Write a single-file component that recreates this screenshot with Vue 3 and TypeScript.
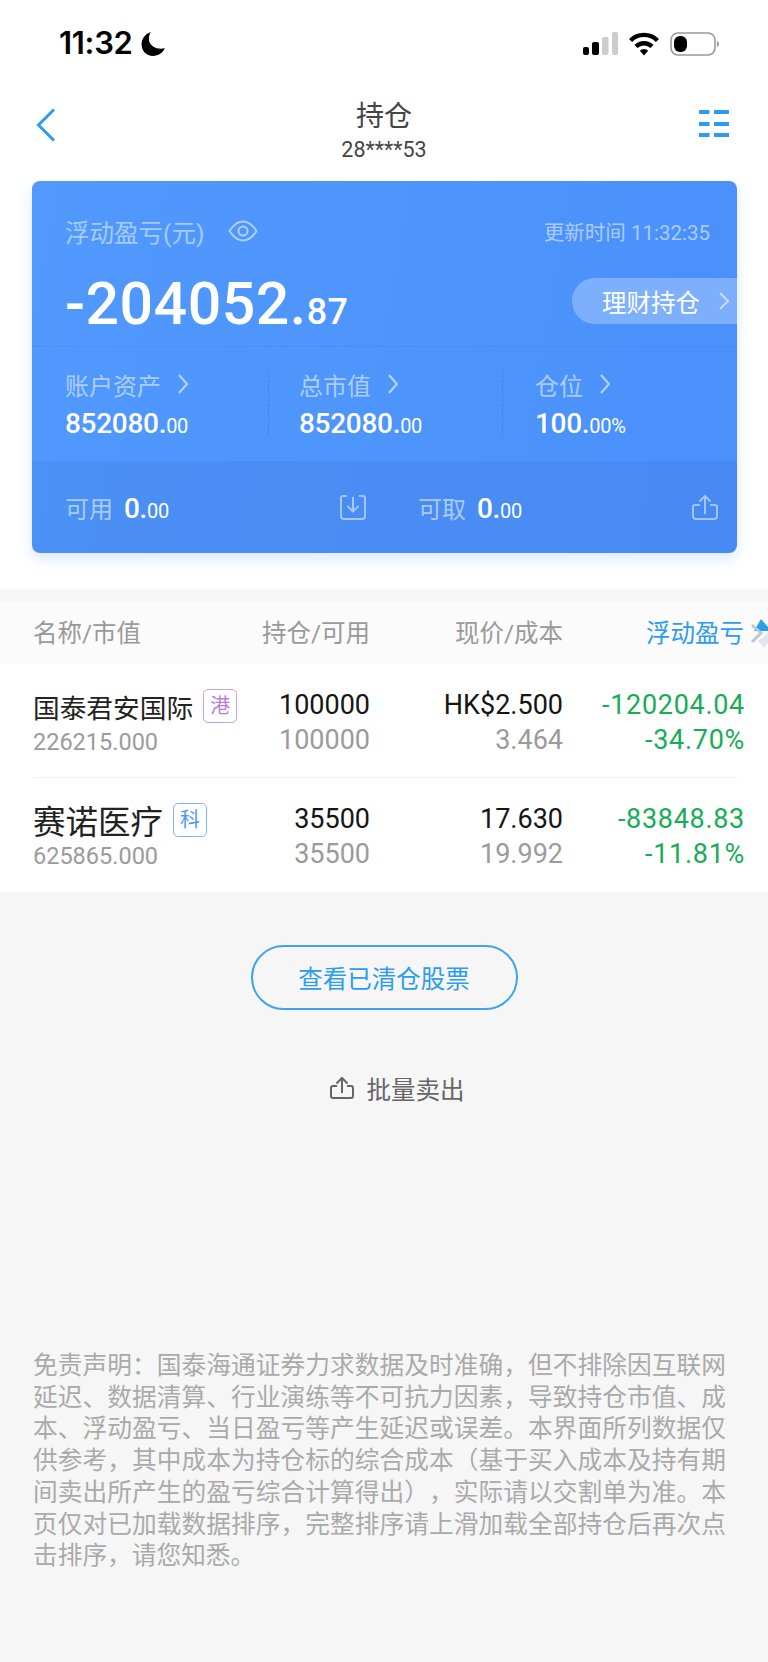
<template>
  <div class="page">
    <div class="status">
      <div class="clock">
        <span>11:32</span>
        <svg width="25" height="26" viewBox="0 0 23 24"><path d="M9 1 C3.5 3 0.5 7.5 0.5 12.5 C0.5 18.5 5 23 11 23 C16 23 20 20.5 22 16 C15 17.5 9 14.5 7.5 9.5 C6.8 6.5 7.5 3.5 9 1 Z" fill="#000"/></svg>
      </div>
      <div class="status-icons">
        <svg width="35" height="24" viewBox="0 0 35 24">
          <rect x="0" y="15" width="6" height="8" rx="2" fill="#000"/>
          <rect x="9" y="10" width="7" height="13" rx="2" fill="#000"/>
          <rect x="19" y="5" width="6.5" height="18" rx="2" fill="#ccc"/>
          <rect x="29" y="0" width="6" height="23" rx="2" fill="#ccc"/>
        </svg>
        <svg width="30" height="24" viewBox="0 0 30 24">
          <path d="M1.5 8.5 A19 19 0 0 1 28.5 8.5" fill="none" stroke="#000" stroke-width="4.4"/>
          <path d="M7 14.5 A11.5 11.5 0 0 1 23 14.5" fill="none" stroke="#000" stroke-width="4.4"/>
          <path d="M10.8 18.8 A6 6 0 0 1 19.2 18.8 L15 23.5 Z" fill="#000"/>
        </svg>
        <svg width="49" height="24" viewBox="0 0 49 24">
          <rect x="1" y="1" width="44" height="22" rx="7" fill="none" stroke="#999" stroke-width="1.6"/>
          <rect x="4" y="4" width="13" height="16" rx="6" fill="#000"/>
          <path d="M47 9 C48.3 9.6 49 10.7 49 12 C49 13.3 48.3 14.4 47 15 Z" fill="#999"/>
        </svg>
      </div>
    </div>

    <div class="nav">
      <svg class="back" width="20" height="34" viewBox="0 0 20 34"><path d="M18 1.5 L2.5 17 L18 32.5" fill="none" stroke="#2d9cf0" stroke-width="3"/></svg>
      <div class="nav-title">
        <div class="title">持仓</div>
        <div class="account">28****53</div>
      </div>
      <svg class="menu" width="30" height="27" viewBox="0 0 30 27">
        <g fill="#2d9cf0">
          <rect x="0" y="0" width="10.5" height="4"/><rect x="15" y="0" width="15" height="4"/>
          <rect x="0" y="12" width="10.5" height="4"/><rect x="15" y="12" width="15" height="4"/>
          <rect x="0" y="23" width="10.5" height="4"/><rect x="15" y="23" width="15" height="4"/>
        </g>
      </svg>
    </div>

    <div class="card-wrap">
      <div class="card">
        <div class="card-top">
          <div class="pnl-head">
            <div class="pnl-label">
              <span>浮动盈亏(元)</span>
              <svg width="30" height="22" viewBox="0 0 30 22" fill="none" stroke="#fff" stroke-opacity=".55" stroke-width="2">
                <path d="M1.5 11 C6 4 10 1.5 15 1.5 C20 1.5 24 4 28.5 11 C24 18 20 20.5 15 20.5 C10 20.5 6 18 1.5 11 Z"/>
                <circle cx="15" cy="11" r="4.5"/>
              </svg>
            </div>
            <span class="updated">更新时间 11:32:35</span>
          </div>
          <div class="pnl-row">
            <div class="pnl-value">-204052.<small>87</small></div>
            <div class="pill">
              <span>理财持仓</span>
              <svg width="12" height="20" viewBox="0 0 12 20"><path d="M2 2 L10 10 L2 18" fill="none" stroke="#fff" stroke-opacity=".6" stroke-width="2"/></svg>
            </div>
          </div>
        </div>
        <div class="metrics">
          <div v-for="m in metrics" :key="m.label" class="metric">
            <div class="metric-label">
              <span>{{ m.label }}</span>
              <svg width="12" height="22" viewBox="0 0 12 22"><path d="M2 2 L10 11 L2 20" fill="none" stroke="#fff" stroke-opacity=".6" stroke-width="2"/></svg>
            </div>
            <div class="metric-value">{{ m.whole }}<small>{{ m.frac }}</small></div>
          </div>
        </div>
        <div class="card-bottom">
          <div class="funds">
            <div class="fund">
              <span class="fund-label">可用</span>
              <span class="fund-value">0.<small>00</small></span>
            </div>
            <svg width="26" height="26" viewBox="0 0 26 26" fill="none" stroke="#fff" stroke-opacity=".5" stroke-width="2">
              <path d="M7 2 H3 A2 2 0 0 0 1 4 V22 A3 3 0 0 0 4 25 H22 A3 3 0 0 0 25 22 V4 A2 2 0 0 0 23 2 H19"/>
              <path d="M13 3 V17 M7.5 12 L13 17.5 L18.5 12"/>
            </svg>
          </div>
          <div class="funds second">
            <div class="fund">
              <span class="fund-label">可取</span>
              <span class="fund-value">0.<small>00</small></span>
            </div>
            <svg width="26" height="26" viewBox="0 0 26 26" fill="none" stroke="#fff" stroke-opacity=".5" stroke-width="2">
              <path d="M8 11 H3 A2 2 0 0 0 1 13 V22 A3 3 0 0 0 4 25 H22 A3 3 0 0 0 25 22 V13 A2 2 0 0 0 23 11 H18"/>
              <path d="M13 20 V2 M7.5 7.5 L13 2 L18.5 7.5"/>
            </svg>
          </div>
        </div>
      </div>
    </div>

    <div class="table-head">
      <span>名称/市值</span>
      <span class="right">持仓/可用</span>
      <span class="right">现价/成本</span>
      <span class="right active">浮动盈亏</span>
      <svg class="sort" width="18" height="30" viewBox="0 0 18 30">
        <path d="M11 0 L18 8 L18 12 L4 12 Z" fill="#2d9cf0"/>
        <path d="M8 22 L18 14 L18 24 L14 29 Z" fill="#e2e7ed"/>
        <path d="M2 6 L11 14 L2 23" fill="none" stroke="#bcc8d6" stroke-width="3"/>
      </svg>
    </div>

    <div class="rows">
      <div v-for="row in rows" :key="row.name" class="row">
        <div class="name-cell">
          <div class="name-line">
            <span class="name" :class="{ big: row.big }">{{ row.name }}</span>
            <span class="tag" :class="row.tagClass">{{ row.tag }}</span>
          </div>
          <div class="sub value">{{ row.value }}</div>
        </div>
        <div class="cell">
          <div class="main">{{ row.hold }}</div>
          <div class="sub">{{ row.avail }}</div>
        </div>
        <div class="cell">
          <div class="main">{{ row.price }}</div>
          <div class="sub">{{ row.cost }}</div>
        </div>
        <div class="cell green">
          <div>{{ row.pnl }}</div>
          <div>{{ row.pct }}</div>
        </div>
      </div>
    </div>

    <div class="footer">
      <button class="cleared">查看已清仓股票</button>
      <div class="batch">
        <svg width="24" height="24" viewBox="0 0 24 24" fill="none" stroke="#666" stroke-width="2">
          <path d="M7 10 H3 A2 2 0 0 0 1 12 V20 A2 2 0 0 0 3 22 H21 A2 2 0 0 0 23 20 V12 A2 2 0 0 0 21 10 H17"/>
          <path d="M12 17 V2 M6.5 7.5 L12 2 L17.5 7.5"/>
        </svg>
        <span>批量卖出</span>
      </div>
      <p class="disclaimer">免责声明：国泰海通证券力求数据及时准确，但不排除因互联网延迟、数据清算、行业演练等不可抗力因素，导致持仓市值、成本、浮动盈亏、当日盈亏等产生延迟或误差。本界面所列数据仅供参考，其中成本为持仓标的综合成本（基于买入成本及持有期间卖出所产生的盈亏综合计算得出），实际请以交割单为准。本页仅对已加载数据排序，完整排序请上滑加载全部持仓后再次点击排序，请您知悉。</p>
    </div>
  </div>
</template>

<script setup lang="ts">
interface Metric {
  label: string
  whole: string
  frac: string
}

interface Row {
  name: string
  big: boolean
  tag: string
  tagClass: string
  value: string
  hold: string
  avail: string
  price: string
  cost: string
  pnl: string
  pct: string
}

const metrics: Metric[] = [
  { label: '账户资产', whole: '852080.', frac: '00' },
  { label: '总市值', whole: '852080.', frac: '00' },
  { label: '仓位', whole: '100.', frac: '00%' }
]

const rows: Row[] = [
  {
    name: '国泰君安国际',
    big: false,
    tag: '港',
    tagClass: 'tag-hk',
    value: '226215.000',
    hold: '100000',
    avail: '100000',
    price: 'HK$2.500',
    cost: '3.464',
    pnl: '-120204.04',
    pct: '-34.70%'
  },
  {
    name: '赛诺医疗',
    big: true,
    tag: '科',
    tagClass: 'tag-kc',
    value: '625865.000',
    hold: '35500',
    avail: '35500',
    price: '17.630',
    cost: '19.992',
    pnl: '-83848.83',
    pct: '-11.81%'
  }
]
</script>

<style>
html,
body {
  margin: 0;
  background: #f6f6f6;
}
</style>

<style scoped>
.page {
  width: 768px;
  height: 1662px;
  overflow: hidden;
  background: #f6f6f6;
  font-family: Roboto, "Noto Sans CJK SC", sans-serif;
  color: #222;
}

small {
  font-size: inherit;
}

.status {
  height: 86px;
  box-sizing: border-box;
  padding: 28px 0 0 59px;
  background: #fff;
  display: flex;
  justify-content: space-between;
}

.clock {
  display: flex;
  align-items: flex-start;
  gap: 8px;
  height: 30px;
  font-family: Inter, sans-serif;
  font-size: 31px;
  line-height: 30px;
  font-weight: 600;
  color: #000;
  letter-spacing: -0.3px;
}

.clock svg {
  margin-top: 3px;
}

.status-icons {
  display: flex;
  align-items: flex-start;
  gap: 11px;
  padding: 4px 49px 0 0;
}

.nav {
  height: 95px;
  background: #fff;
  display: flex;
  justify-content: space-between;
  padding: 0 39px 0 36px;
  position: relative;
}

.back {
  margin-top: 22px;
}

.menu {
  margin-top: 24px;
}

.nav-title {
  position: absolute;
  left: 0;
  right: 0;
  top: 14px;
  text-align: center;
}

.title {
  font-size: 28px;
  line-height: 34px;
  color: #444;
}

.account {
  font-size: 21.5px;
  line-height: 24px;
  margin-top: 4px;
  color: #444;
}

.card-wrap {
  height: 408px;
  box-sizing: border-box;
  padding: 0 31px 0 32px;
  background: #fff;
}

.card {
  height: 372px;
  border-radius: 8px;
  overflow: hidden;
  background: linear-gradient(100deg, #5199fd 0%, #4a90fb 100%);
  box-shadow: 0 6px 14px rgba(74, 144, 251, 0.2);
  color: #fff;
}

.card-top {
  height: 166px;
  box-sizing: border-box;
  padding: 33px 0 0 33px;
  border-bottom: 1px solid rgba(60, 120, 220, 0.25);
}

.pnl-head {
  display: flex;
  justify-content: space-between;
  align-items: center;
  height: 34px;
  padding-right: 27px;
}

.pnl-label {
  display: flex;
  align-items: center;
  gap: 24px;
  font-size: 24.5px;
  color: rgba(255, 255, 255, 0.5);
}

.updated {
  font-size: 20.5px;
  color: rgba(255, 255, 255, 0.55);
}

.pnl-row {
  display: flex;
  justify-content: space-between;
  margin-top: 20px;
}

.pnl-value {
  font-size: 59px;
  line-height: 72px;
  font-weight: 500;
  letter-spacing: 0.5px;
}

.pnl-value small {
  font-size: 36px;
}

.pill {
  width: 165px;
  height: 46px;
  margin-top: 10px;
  border-radius: 23px 0 0 23px;
  background: rgba(255, 255, 255, 0.28);
  display: flex;
  align-items: center;
  gap: 18px;
  padding-left: 30px;
  box-sizing: border-box;
  font-size: 24.5px;
}

.metrics {
  height: 114px;
  box-sizing: border-box;
  display: grid;
  grid-template-columns: 234px 236px 1fr;
  padding: 0 0 0 33px;
  align-content: start;
}

.metric {
  height: 74px;
  margin-top: 19px;
  position: relative;
}

.metric + .metric::before {
  content: "";
  position: absolute;
  left: -31px;
  top: 4px;
  bottom: 4px;
  border-left: 1px dashed rgba(50, 110, 210, 0.45);
}

.metric:last-child::before {
  left: -33px;
}

.metric-label {
  display: flex;
  align-items: center;
  gap: 16px;
  height: 36px;
  font-size: 24px;
  color: rgba(255, 255, 255, 0.55);
}

.metric-value {
  font-size: 28px;
  line-height: 40px;
  margin-top: 2px;
  font-weight: 500;
  letter-spacing: -0.3px;
}

.metric-value small {
  font-size: 20px;
  font-weight: 400;
}

.card-bottom {
  height: 92px;
  background: rgba(50, 100, 200, 0.14);
  display: flex;
  padding: 0 19px 0 33px;
  align-items: center;
}

.funds {
  display: flex;
  justify-content: space-between;
  align-items: center;
  width: 301px;
}

.funds.second {
  margin-left: 52px;
  width: 300px;
}

.fund {
  display: flex;
  align-items: baseline;
  gap: 11px;
}

.fund-label {
  font-size: 24px;
  color: rgba(255, 255, 255, 0.55);
}

.fund-value {
  font-size: 28px;
  font-weight: 500;
  letter-spacing: -0.3px;
}

.fund-value small {
  font-size: 20px;
  font-weight: 400;
}

.table-head {
  margin-top: 12px;
  height: 63px;
  box-sizing: border-box;
  padding: 0 0 3px 33px;
  background: #fbfbfb;
  display: grid;
  grid-template-columns: 240px 97px 193px 181px;
  align-items: center;
  font-size: 24.5px;
  color: #999;
  position: relative;
  white-space: nowrap;
}

.right {
  display: flex;
  justify-content: flex-end;
}

.active {
  color: #2d9cf0;
}

.sort {
  position: absolute;
  left: 750px;
  top: 18px;
}

.rows {
  background: #fff;
}

.row {
  height: 114px;
  margin-left: 33px;
  box-sizing: border-box;
  display: grid;
  grid-template-columns: 240px 97px 193px 182px;
  position: relative;
  align-items: start;
  padding-top: 24px;
  font-size: 27px;
  line-height: 35px;
}

.row:first-child::after {
  content: "";
  position: absolute;
  left: 0;
  width: 704px;
  bottom: 0;
  height: 1px;
  background: #f1f1f1;
}

.name-line {
  display: flex;
  align-items: center;
  gap: 10px;
  height: 35px;
  margin-top: 4px;
  white-space: nowrap;
}

.name {
  font-size: 26.7px;
  color: #222;
}

.name.big {
  font-size: 32.5px;
}

.tag {
  width: 34px;
  height: 34px;
  box-sizing: border-box;
  border: 1px solid;
  border-radius: 5px;
  font-size: 20px;
  line-height: 32px;
  text-align: center;
  margin-top: -8px;
}

.tag-hk {
  color: #b77fdc;
  border-color: #c9a1e4;
}

.tag-kc {
  color: #4f98fc;
  border-color: #7fb4fc;
}

.cell {
  text-align: right;
  white-space: nowrap;
}

.main {
  color: #151515;
}

.sub {
  color: #9b9b9b;
}

.value {
  font-size: 23.5px;
  margin-top: -2px;
}

.green {
  color: #16ad56;
  letter-spacing: 0.7px;
}

.footer {
  display: flex;
  flex-direction: column;
  align-items: center;
  padding-top: 53px;
}

.cleared {
  width: 267px;
  height: 65px;
  border: 2px solid #3fa3ef;
  border-radius: 33px;
  background: transparent;
  font-family: inherit;
  font-size: 24.5px;
  color: #2d9cf0;
  padding: 0;
}

.batch {
  margin: 60px 0 0 26px;
  display: flex;
  align-items: center;
  gap: 13px;
  font-size: 24.5px;
  color: #666;
  height: 36px;
}

.disclaimer {
  width: 693px;
  align-self: flex-start;
  margin: 244px 0 0 33px;
  font-size: 24.7px;
  line-height: 31.7px;
  color: #aaa;
  text-align: justify;
  text-spacing-trim: space-all;
}
</style>
